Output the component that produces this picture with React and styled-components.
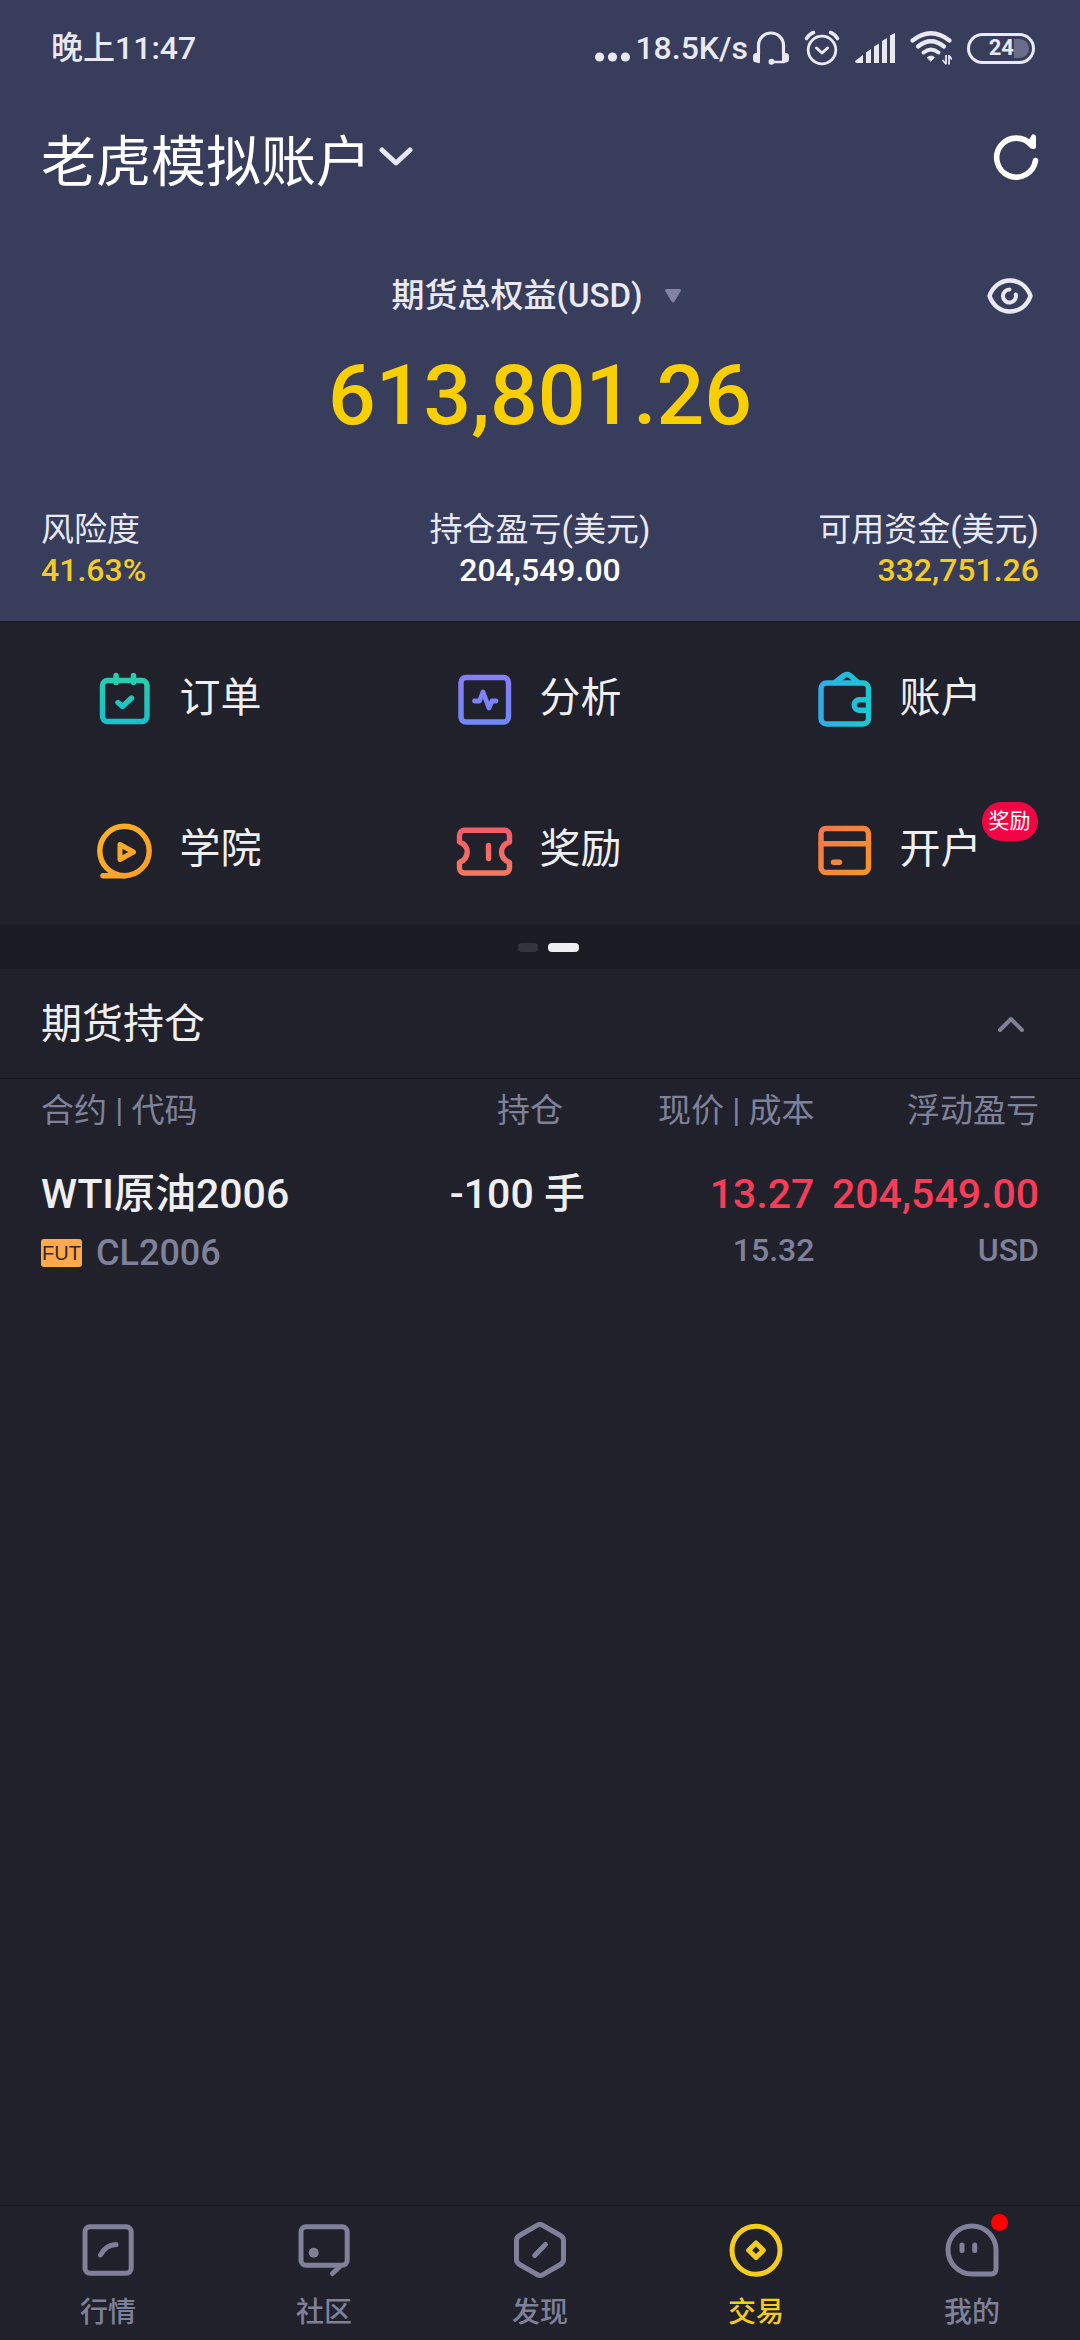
import styled, { createGlobalStyle } from "styled-components";

const GlobalStyle = createGlobalStyle`
  * {
    box-sizing: border-box;
  }

  body {
    margin: 0;
    background: #21212b;
    color: #efeff1;
    font-family: Roboto, "Noto Sans CJK SC", sans-serif;
  }

  button {
    padding: 0;
    border: none;
    background: transparent;
    color: inherit;
    font: inherit;
    cursor: pointer;
  }

  svg {
    display: block;
    flex: none;
    fill: none;
    stroke-linecap: round;
    stroke-linejoin: round;
  }
`;

const Page = styled.div`
  display: flex;
  flex-direction: column;
  min-height: 100vh;
`;

const Header = styled.header`
  padding-bottom: 31px;
  border-bottom: 1px solid #1a1a22;
  background: #383d5b;
`;

const StatusBar = styled.div`
  display: flex;
  align-items: center;
  justify-content: space-between;
  height: 96px;
  padding: 0 45px 0 51px;
  color: #e8e9f3;
  font-size: 32px;
  font-weight: 500;
  line-height: 40px;
`;

const StatusIcons = styled.div`
  display: flex;
  align-items: center;
  gap: 15px;
`;

const Network = styled.div`
  display: flex;
  align-items: center;
  gap: 5px;
`;

const Battery = styled.div`
  display: flex;
  align-items: center;
  justify-content: flex-end;
  width: 68px;
  height: 31px;
  padding-right: 3px;
  border: 3px solid #e8e9f3;
  border-radius: 16px;
  font-size: 22px;
  font-weight: 700;
`;

const BatteryRest = styled.span`
  width: 15px;
  height: 19px;
  border-radius: 0 10px 10px 0;
  background: #6a6d87;
`;

const AccountBar = styled.div`
  display: flex;
  align-items: center;
  justify-content: space-between;
  height: 122px;
  padding: 0 41px;
`;

const AccountButton = styled.button`
  display: flex;
  align-items: center;
  gap: 8px;
  color: #fff;
  font-size: 55px;
`;

const Equity = styled.div`
  display: grid;
  grid-template-columns: 1fr auto 1fr;
  align-items: center;
  margin-top: 58px;
  padding: 0 47px;
`;

const EquityButton = styled.button`
  display: flex;
  grid-column: 2;
  align-items: center;
  gap: 22px;
  color: #e8e9f3;
  font-size: 33px;
  font-weight: 500;
  line-height: 40px;
`;

const EyeButton = styled.button`
  justify-self: end;
`;

const Total = styled.div`
  margin-top: 30px;
  color: #f8cf05;
  font-size: 84px;
  font-weight: 500;
  line-height: 100px;
  text-align: center;
`;

const Stats = styled.div`
  display: grid;
  grid-template-columns: repeat(3, 1fr);
  margin-top: 64px;
  padding: 0 41px;
`;

const Stat = styled.div`
  color: #e8e9f3;
  font-size: 33px;
  line-height: 40px;
  text-align: ${(props) => props.$align};
`;

const StatValue = styled.div`
  color: ${(props) => (props.$highlight ? "#f0cb2a" : "#fff")};
  font-size: 32px;
  font-weight: 500;
`;

const Menu = styled.nav`
  display: grid;
  grid-template-columns: repeat(3, 1fr);
  padding-bottom: 1px;
`;

const MenuButton = styled.button`
  display: flex;
  align-items: center;
  justify-content: center;
  gap: 25px;
  padding: 45px 4px 44px 0;
  font-size: 41px;
  line-height: 62px;
`;

const MenuLabel = styled.span`
  position: relative;
`;

const Badge = styled.span`
  position: absolute;
  top: -16px;
  left: 100%;
  width: 56px;
  border-radius: 20px;
  background: #f20544;
  color: #fff;
  font-size: 21px;
  line-height: 39px;
  text-align: center;
`;

const Pager = styled.div`
  display: flex;
  align-items: center;
  justify-content: center;
  gap: 10px;
  height: 44px;
  padding-left: 16px;
  background: #1b1b23;
`;

const PagerDot = styled.span`
  width: ${(props) => (props.$active ? "31px" : "20px")};
  height: 9px;
  border-radius: 4px;
  background: ${(props) => (props.$active ? "#efeff1" : "#34343f")};
`;

const Positions = styled.section`
  flex: 1;
`;

const SectionHeader = styled.div`
  display: flex;
  align-items: center;
  justify-content: space-between;
  height: 110px;
  padding: 0 55px 0 41px;
  border-bottom: 1px solid #181820;
`;

const SectionTitle = styled.h2`
  margin: 0;
  font-size: 41px;
  font-weight: 400;
  line-height: 62px;
`;

const TableWrapper = styled.div`
  padding: 0 41px;
`;

const Table = styled.table`
  width: 100%;
  border-collapse: collapse;
  table-layout: fixed;
`;

const HeadCell = styled.th`
  width: ${(props) => props.$width};
  height: 64px;
  padding: 0 ${(props) => (props.$inset ? "22px" : "0")} 0 0;
  color: #7f819a;
  font-size: 33px;
  font-weight: 400;
  line-height: 40px;
  text-align: ${(props) => (props.$left ? "left" : "right")};
`;

const Cell = styled.td`
  padding: 26px 0 20px;
  font-size: 41px;
  font-weight: 500;
  line-height: 50px;
  text-align: ${(props) => (props.$left ? "left" : "right")};
  vertical-align: top;
  white-space: nowrap;
  color: ${(props) => (props.$loss ? "#f53d57" : "#efeff1")};
`;

const SubValue = styled.div`
  margin-top: 9px;
  color: #7f819a;
  font-size: 32px;
  line-height: 44px;
`;

const Contract = styled.div`
  display: flex;
  align-items: center;
  gap: 14px;
  margin-top: 9px;
  color: #7f819a;
  font-size: 36px;
  line-height: 50px;
`;

const FutTag = styled.span`
  width: 41px;
  border-radius: 3px;
  background: #ffa94d;
  color: #33281f;
  font-family: "Liberation Sans", sans-serif;
  font-size: 20px;
  font-weight: 400;
  line-height: 28px;
  text-align: center;
`;

const TabBar = styled.nav`
  display: grid;
  grid-template-columns: repeat(5, 1fr);
  padding: 16px 0 7px;
  border-top: 1px solid #181820;
`;

const Tab = styled.a`
  display: flex;
  flex-direction: column;
  align-items: center;
  gap: 15px;
  color: ${(props) => (props.$active ? "#f2cc20" : "#7f819a")};
  font-size: 28px;
  font-weight: 500;
  line-height: 40px;
  text-decoration: none;
`;

const TabIcon = styled.span`
  position: relative;
`;

const RedDot = styled.span`
  position: absolute;
  top: -8px;
  right: -8px;
  width: 17px;
  height: 17px;
  border-radius: 50%;
  background: #f00;
`;

const MoreDots = () => (
  <svg width="35" height="32" viewBox="0 0 35 32">
    <g fill="#e8e9f3">
      <circle cx="4.600" cy="25" r="4.600" />
      <circle cx="17.500" cy="25" r="4.600" />
      <circle cx="30.400" cy="25" r="4.600" />
    </g>
  </svg>
);

const Headphones = () => (
  <svg width="36" height="34" viewBox="0 0 36 34" stroke="#e8e9f3">
    <path d="M5.500 24V14.500a12.500 12.500 0 0 1 25 0V24" strokeWidth="3.200" />
    <path d="M5.500 25v6M30.500 25v6M18 31h13" strokeWidth="2.400" />
    <path
      d="M7 22H3.500A3.500 3.500 0 0 0 0 25.500V28a3.500 3.500 0 0 0 3.500 3.500H7zM29 22h3.500a3.500 3.500 0 0 1 3.500 3.500V28a3.500 3.500 0 0 1-3.500 3.500H29z"
      fill="#e8e9f3"
      stroke="none"
    />
    <circle cx="18.500" cy="30.700" r="3" fill="#e8e9f3" stroke="none" />
  </svg>
);

const Alarm = () => (
  <svg width="36" height="36" viewBox="0 0 36 36" stroke="#e8e9f3">
    <circle cx="18" cy="20" r="13.800" strokeWidth="2.800" />
    <path d="M12.500 18l5.500 5 5.500-5" strokeWidth="3" />
    <path d="M2.500 8.500c2-3 4-5 7-6M33.500 8.500c-2-3-4-5-7-6" strokeWidth="3.600" />
  </svg>
);

const Signal = () => (
  <svg width="40" height="30" viewBox="0 0 40 30">
    <path
      d="M0 28l8-6v8H2q-2 0-2-2zM11 19.500l5-3.500v14h-5zM19 13.500l5-3v19.500h-5zM27 8l5-3v25h-5zM35 2.500l5-2.500v30h-5z"
      fill="#e8e9f3"
    />
  </svg>
);

const Wifi = () => (
  <svg width="42" height="34" viewBox="0 0 42 34" stroke="#e8e9f3">
    <path d="M2.500 9.500Q21-5 39.500 9.500" strokeWidth="4.200" />
    <path d="M8 15.500Q21 5 34 15.500" strokeWidth="4.200" />
    <path d="M13.500 21.500Q21 15.500 28.500 21.500" strokeWidth="4" />
    <path d="M17.500 26.500q3.500-3 7 0L21 30z" fill="#e8e9f3" strokeWidth="1" />
    <path
      d="M36 24v9.500M36 33l-3.500-4M39 33.500V24M39 24.500l3 4"
      strokeWidth="1.800"
      strokeLinecap="butt"
    />
  </svg>
);

const ChevronDown = () => (
  <svg width="34" height="22" viewBox="0 0 34 22" stroke="#e8e9f3">
    <path d="M3 4l14 13L31 4" strokeWidth="5" />
  </svg>
);

const ChevronUp = () => (
  <svg width="28" height="20" viewBox="0 0 28 20" stroke="#7f819a">
    <path d="M3 16L14 5l11 11" strokeWidth="4" />
  </svg>
);

const Refresh = () => (
  <svg width="46" height="46" viewBox="0 0 46 46" stroke="#fff">
    <path d="M42.500 26.500A19.500 19.500 0 1 1 38.500 11.500" strokeWidth="5.600" />
    <path d="M40.500 3v9.500l-4-3z" strokeWidth="5" />
  </svg>
);

const Eye = () => (
  <svg width="46" height="38" viewBox="0 0 46 38" stroke="#e8e9f3">
    <path
      d="M2.500 19C6 9 14 3.500 23 3.500S40 9 43.500 19C40 29 32 34.500 23 34.500S6 29 2.500 19z"
      strokeWidth="4.400"
    />
    <path d="M22.500 12.500a6.500 6.500 0 1 0 6.300 5" strokeWidth="4" />
  </svg>
);

const Triangle = () => (
  <svg width="24" height="14" viewBox="0 0 24 14">
    <path d="M2 0h12q3 0 1.500 2.500l-6 10q-1.500 2-3 0l-6-10Q-1 0 2 0z" fill="#8183a0" />
  </svg>
);

const gradients = {
  orders: ["#2ccfa8", "#14c0d0", 0, 1],
  analysis: ["#8a7bf8", "#7089f6", 0, 1],
  wallet: ["#33a9ea", "#17cbd0", 1, 0],
  academy: ["#f9b626", "#fa9a2c", 1, 1],
  rewards: ["#f2566e", "#f57a5e", 0, 1],
  open: ["#f27156", "#f59a22", 1, 1],
};

const drawings = {
  orders: (
    <>
      <rect x="7.500" y="12.500" width="44.500" height="41" rx="5" />
      <path d="M21 7.500v7M38.500 7.500v7" />
      <path d="M23 34.500l4.500 4 9-8.500" />
    </>
  ),
  analysis: (
    <>
      <rect x="6" y="9.500" width="47.500" height="44.500" rx="5" />
      <path d="M19.500 33h5L28 24l6 16 3-7h4" strokeWidth="4.800" />
    </>
  ),
  wallet: (
    <>
      <rect x="6" y="15" width="47.500" height="41" rx="5.500" />
      <path d="M20 14.500l9-7q3-2 6 0l8 7" />
      <path d="M52 31.700h-7.500a5.300 5.300 0 0 0 0 10.600H52" />
    </>
  ),
  academy: (
    <>
      <circle cx="29.500" cy="32" r="24.700" />
      <path d="M8 56.700h22" />
      <path d="M25 25.500v15l13.500-7.500z" strokeWidth="5" />
    </>
  ),
  rewards: (
    <>
      <path d="M9.500 11.300h40a5 5 0 0 1 5 5V23c-5.500 2-8 6-8 10s2.500 8 8 10.500V49a5 5 0 0 1-5 5h-40a5 5 0 0 1-5-5v-5.500C10 41 12.200 37 12.200 33S10 25 4.500 23v-6.700a5 5 0 0 1 5-5z" />
      <path d="M33.500 26.500l.1 13" />
    </>
  ),
  open: (
    <>
      <rect x="6" y="9.500" width="47.500" height="44" rx="5" />
      <path d="M6 24.700h47.500v.1M18.500 43.200h6v.1" />
    </>
  ),
};

function MenuIcon({ name }) {
  const [from, to, x2, y2] = gradients[name];
  return (
    <svg width="60" height="60" viewBox="0 0 60 60" strokeWidth="5.400" stroke={`url(#menu-${name})`}>
      <defs>
        <linearGradient
          id={`menu-${name}`}
          gradientUnits="userSpaceOnUse"
          x1="0"
          y1="0"
          x2={x2 * 60}
          y2={y2 * 60}
        >
          <stop offset="0" stopColor={from} />
          <stop offset="1" stopColor={to} />
        </linearGradient>
      </defs>
      {drawings[name]}
    </svg>
  );
}

const menuItems = [
  { icon: "orders", label: "订单" },
  { icon: "analysis", label: "分析" },
  { icon: "wallet", label: "账户" },
  { icon: "academy", label: "学院" },
  { icon: "rewards", label: "奖励" },
  { icon: "open", label: "开户", badge: "奖励" },
];

const stats = [
  { label: "风险度", value: "41.63%", align: "left", highlight: true },
  { label: "持仓盈亏(美元)", value: "204,549.00", align: "center" },
  { label: "可用资金(美元)", value: "332,751.26", align: "right", highlight: true },
];

const tabs = [
  {
    id: "market",
    label: "行情",
    icon: (
      <>
        <rect x="5" y="4.700" width="46.200" height="46.500" rx="5" />
        <path d="M20.500 33Q25.500 23 36 22.500" />
      </>
    ),
  },
  {
    id: "community",
    label: "社区",
    icon: (
      <>
        <rect x="5" y="4.700" width="46.200" height="38.500" rx="5" />
        <path d="M44 44.500l-7.500 7" />
        <circle cx="17.700" cy="30.700" r="5" fill="currentColor" stroke="none" />
      </>
    ),
  },
  {
    id: "discover",
    label: "发现",
    icon: (
      <>
        <path d="M25.500 3.200q2.500-1.400 5 0l18 10.300q3 1.800 3 5v19q0 3.200-3 5l-18 10.300q-2.500 1.400-5 0l-18-10.300q-3-1.800-3-5v-19q0-3.200 3-5z" />
        <path d="M22.700 33.500L33.500 22.500" />
      </>
    ),
  },
  {
    id: "trade",
    label: "交易",
    active: true,
    icon: (
      <>
        <circle cx="28" cy="28.300" r="24" />
        <path d="M28 21l7.300 7.300-7.300 7.300-7.300-7.300z" />
      </>
    ),
  },
  {
    id: "mine",
    label: "我的",
    hasNews: true,
    icon: (
      <>
        <path d="M52 28v19.500a4.500 4.500 0 0 1-4.500 4.500H28a24 24 0 1 1 24-24z" />
        <path d="M18 23v5.500M30.700 23v5.500" />
      </>
    ),
  },
];

function App() {
  return (
    <Page>
      <GlobalStyle />
      <Header>
        <StatusBar>
          <span>晚上11:47</span>
          <StatusIcons>
            <Network>
              <MoreDots />
              <span>18.5K/s</span>
              <Headphones />
            </Network>
            <Alarm />
            <Signal />
            <Wifi />
            <Battery>
              24
              <BatteryRest />
            </Battery>
          </StatusIcons>
        </StatusBar>
        <AccountBar>
          <AccountButton>
            老虎模拟账户
            <ChevronDown />
          </AccountButton>
          <button aria-label="刷新">
            <Refresh />
          </button>
        </AccountBar>
        <Equity>
          <EquityButton>
            期货总权益(USD)
            <Triangle />
          </EquityButton>
          <EyeButton aria-label="显示金额">
            <Eye />
          </EyeButton>
        </Equity>
        <Total>613,801.26</Total>
        <Stats>
          {stats.map((stat) => (
            <Stat key={stat.label} $align={stat.align}>
              {stat.label}
              <StatValue $highlight={stat.highlight}>{stat.value}</StatValue>
            </Stat>
          ))}
        </Stats>
      </Header>

      <Menu>
        {menuItems.map((item) => (
          <MenuButton key={item.icon}>
            <MenuIcon name={item.icon} />
            <MenuLabel>
              {item.label}
              {item.badge && <Badge>{item.badge}</Badge>}
            </MenuLabel>
          </MenuButton>
        ))}
      </Menu>
      <Pager>
        <PagerDot />
        <PagerDot $active />
      </Pager>

      <Positions>
        <SectionHeader>
          <SectionTitle>期货持仓</SectionTitle>
          <button aria-label="收起">
            <ChevronUp />
          </button>
        </SectionHeader>
        <TableWrapper>
          <Table>
            <thead>
              <tr>
                <HeadCell $left $width="31.5%">
                  合约 | 代码
                </HeadCell>
                <HeadCell $inset $width="23%">
                  持仓
                </HeadCell>
                <HeadCell $width="23%">现价 | 成本</HeadCell>
                <HeadCell $width="22.5%">浮动盈亏</HeadCell>
              </tr>
            </thead>
            <tbody>
              <tr>
                <Cell $left>
                  WTI原油2006
                  <Contract>
                    <FutTag>FUT</FutTag>
                    CL2006
                  </Contract>
                </Cell>
                <Cell>-100 手</Cell>
                <Cell $loss>
                  13.27
                  <SubValue>15.32</SubValue>
                </Cell>
                <Cell $loss>
                  204,549.00
                  <SubValue>USD</SubValue>
                </Cell>
              </tr>
            </tbody>
          </Table>
        </TableWrapper>
      </Positions>

      <TabBar>
        {tabs.map((tab) => (
          <Tab key={tab.id} href={`#${tab.id}`} $active={tab.active}>
            <TabIcon>
              <svg width="56" height="56" viewBox="0 0 56 56" stroke="currentColor" strokeWidth="5">
                {tab.icon}
              </svg>
              {tab.hasNews && <RedDot />}
            </TabIcon>
            {tab.label}
          </Tab>
        ))}
      </TabBar>
    </Page>
  );
}

export default App;
